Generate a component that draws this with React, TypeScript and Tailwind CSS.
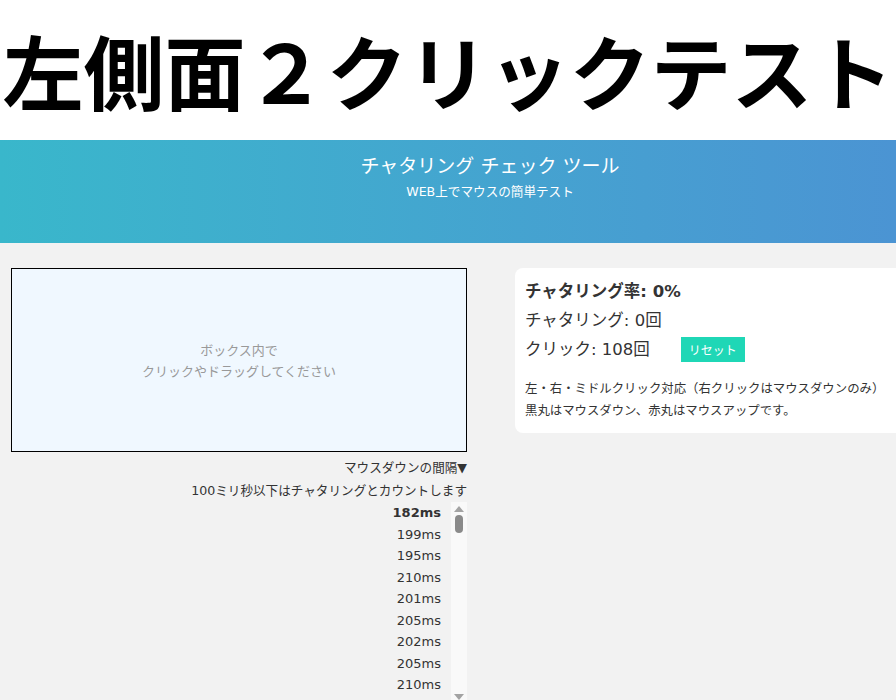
const intervals = [182, 199, 195, 210, 201, 205, 202, 205, 210];

const font = "font-['DejaVu_Sans','Noto_Sans_CJK_JP',sans-serif]";

function IntervalList() {
  return (
    <div className="flex h-[200px] overflow-hidden">
      <div className="w-[60px] pr-[10px] text-right text-[13px] text-[#333]">
        {intervals.map((ms, i) => (
          <div key={i} className={`h-[21.5px] leading-[21.5px] ${i === 0 ? "font-bold" : ""}`}>
            {ms}ms
          </div>
        ))}
      </div>
      {/* scrollbar */}
      <div className="flex w-[16px] flex-col items-center bg-[#f9f9f9] pt-[4px]">
        <div className="h-0 w-0 border-x-[5px] border-b-[6px] border-x-transparent border-b-[#a3a3a3]" />
        <div className="mt-[3px] h-[18px] w-[8px] rounded-full bg-[#8a8a8a]" />
        <div className="flex-1" />
        <div className="mb-[2px] h-0 w-0 border-x-[5px] border-t-[6px] border-x-transparent border-t-[#a3a3a3]" />
      </div>
    </div>
  );
}

export default function App() {
  return (
    <div className={`h-[700px] w-[896px] overflow-hidden bg-[#f2f2f2] ${font}`}>
      {/* page title */}
      <div className="flex h-[140px] items-center justify-center bg-white pb-[4px]">
        <h1 className="font-['Noto_Sans_CJK_JP',sans-serif] text-[81px] leading-none font-bold text-black">
          左側面２クリックテスト
        </h1>
      </div>

      {/* tool header */}
      <div className="flex h-[103px] flex-col items-center bg-gradient-to-r from-[#39b7cb] to-[#4b94d3] pl-[84px] pt-[13px] text-white">
        <div className="text-[19px] leading-[26px]">チャタリング チェック ツール</div>
        <div className="mt-[3px] text-[12.6px] leading-[20px]">WEB上でマウスの簡単テスト</div>
      </div>

      <div className="flex gap-[48px] pl-[11px] pt-[25px]">
        {/* left column */}
        <div className="w-[456px] shrink-0">
          <div className="flex h-[184px] items-center justify-center border border-black bg-[#f0f8ff] text-center text-[13px] leading-[21px] text-[#999]">
            <div className="mt-[2px]">
              ボックス内で
              <br />
              クリックやドラッグしてください
            </div>
          </div>
          <div className="mt-[4px] text-right text-[12.6px] leading-[23px] text-[#333]">
            <div>マウスダウンの間隔▼</div>
            <div>100ミリ秒以下はチャタリングとカウントします</div>
          </div>
          <div className="flex justify-end">
            <IntervalList />
          </div>
        </div>

        {/* stats card */}
        <div className="h-[165px] w-[420px] shrink-0 rounded-[8px] bg-white px-[10px] pt-[10px] text-[#333]">
          <div className="text-[16.5px] leading-[28px] font-bold">チャタリング率: 0%</div>
          <div className="text-[16.5px] leading-[29px]">チャタリング: 0回</div>
          <div className="flex items-center text-[16.5px] leading-[29px]">
            <span>クリック: 108回</span>
            <button className="ml-[31px] h-[25px] w-[64px] bg-[#1fd7b6] text-[12px] text-white">
              リセット
            </button>
          </div>
          <div className="mt-[14px] text-[12.4px] leading-[22px]">
            <div>左・右・ミドルクリック対応（右クリックはマウスダウンのみ）</div>
            <div>黒丸はマウスダウン、赤丸はマウスアップです。</div>
          </div>
        </div>
      </div>
    </div>
  );
}
